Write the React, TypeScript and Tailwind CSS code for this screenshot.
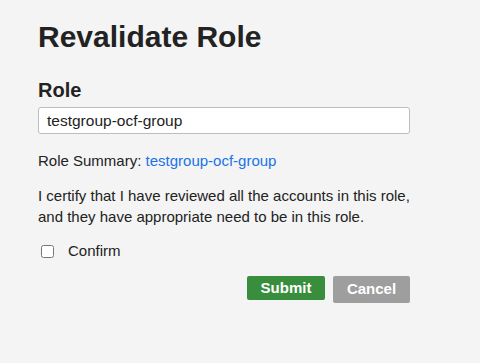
import { useState } from "react";

export default function App() {
  const [role, setRole] = useState("testgroup-ocf-group");
  const [confirmed, setConfirmed] = useState(false);

  return (
    <div
      className="min-h-screen bg-[#f4f4f4] text-[#222]"
      style={{ fontFamily: '"Liberation Sans", Arial, sans-serif' }}
    >
      <div className="w-[372px] ml-[38px] pt-[19px]">
        <h1 className="text-[30px] leading-[36px] font-bold">Revalidate Role</h1>

        <h2 className="mt-[23px] text-[20px] leading-[24px] font-bold">Role</h2>
        <input
          type="text"
          value={role}
          onChange={(e) => setRole(e.target.value)}
          className="mt-[5px] block w-full h-[27px] rounded-[3px] border border-[#bdbdbd] bg-white px-[8px] text-[15.5px] text-[#222] outline-none"
        />

        <p className="mt-[17px] text-[15px] leading-[20px]">
          Role Summary:{" "}
          <a href="#" className="text-[#1a73e8]">
            testgroup-ocf-group
          </a>
        </p>

        <p className="mt-[14px] text-[15px] leading-[21px]">
          I certify that I have reviewed all the accounts in this role, and they have appropriate need to be in this role.
        </p>

        <label className="mt-[14px] flex items-center gap-[14px] pl-[3px] text-[15px] leading-[20px]">
          <input
            type="checkbox"
            checked={confirmed}
            onChange={(e) => setConfirmed(e.target.checked)}
            className="h-[13px] w-[13px]"
          />
          Confirm
        </label>

        <div className="mt-[15px] flex justify-end items-start gap-[8px]">
          <button className="h-[24px] w-[78px] rounded-[2px] bg-[#388e3c] text-[15px] font-bold text-white">
            Submit
          </button>
          <button className="h-[27px] w-[77px] rounded-[2px] bg-[#9e9e9e] text-[15px] font-bold text-white">
            Cancel
          </button>
        </div>
      </div>
    </div>
  );
}
